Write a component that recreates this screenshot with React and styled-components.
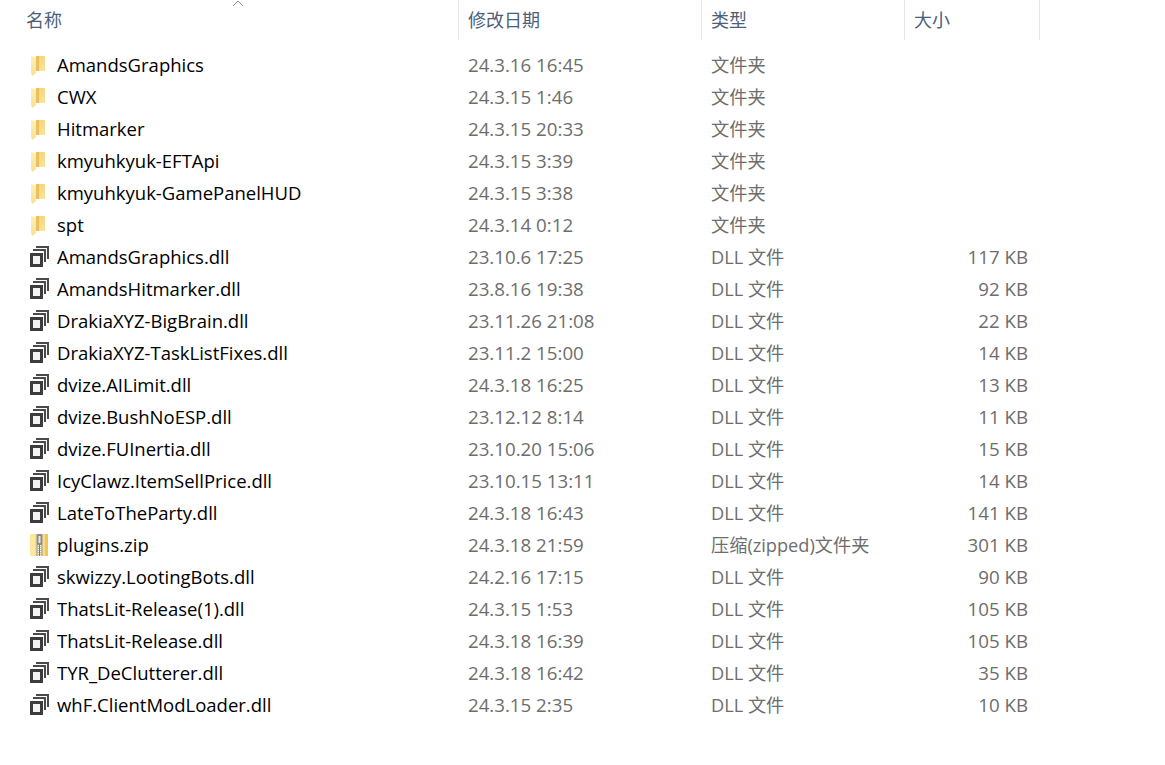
import React from 'react';
import styled, { createGlobalStyle } from 'styled-components';

const files = [
  ['folder', 'AmandsGraphics', '24.3.16 16:45', '文件夹', ''],
  ['folder', 'CWX', '24.3.15 1:46', '文件夹', ''],
  ['folder', 'Hitmarker', '24.3.15 20:33', '文件夹', ''],
  ['folder', 'kmyuhkyuk-EFTApi', '24.3.15 3:39', '文件夹', ''],
  ['folder', 'kmyuhkyuk-GamePanelHUD', '24.3.15 3:38', '文件夹', ''],
  ['folder', 'spt', '24.3.14 0:12', '文件夹', ''],
  ['dll', 'AmandsGraphics.dll', '23.10.6 17:25', 'DLL 文件', '117 KB'],
  ['dll', 'AmandsHitmarker.dll', '23.8.16 19:38', 'DLL 文件', '92 KB'],
  ['dll', 'DrakiaXYZ-BigBrain.dll', '23.11.26 21:08', 'DLL 文件', '22 KB'],
  ['dll', 'DrakiaXYZ-TaskListFixes.dll', '23.11.2 15:00', 'DLL 文件', '14 KB'],
  ['dll', 'dvize.AILimit.dll', '24.3.18 16:25', 'DLL 文件', '13 KB'],
  ['dll', 'dvize.BushNoESP.dll', '23.12.12 8:14', 'DLL 文件', '11 KB'],
  ['dll', 'dvize.FUInertia.dll', '23.10.20 15:06', 'DLL 文件', '15 KB'],
  ['dll', 'IcyClawz.ItemSellPrice.dll', '23.10.15 13:11', 'DLL 文件', '14 KB'],
  ['dll', 'LateToTheParty.dll', '24.3.18 16:43', 'DLL 文件', '141 KB'],
  ['zip', 'plugins.zip', '24.3.18 21:59', '压缩(zipped)文件夹', '301 KB'],
  ['dll', 'skwizzy.LootingBots.dll', '24.2.16 17:15', 'DLL 文件', '90 KB'],
  ['dll', 'ThatsLit-Release(1).dll', '24.3.15 1:53', 'DLL 文件', '105 KB'],
  ['dll', 'ThatsLit-Release.dll', '24.3.18 16:39', 'DLL 文件', '105 KB'],
  ['dll', 'TYR_DeClutterer.dll', '24.3.18 16:42', 'DLL 文件', '35 KB'],
  ['dll', 'whF.ClientModLoader.dll', '24.3.15 2:35', 'DLL 文件', '10 KB'],
];

const GlobalStyle = createGlobalStyle`
  html, body { margin: 0; background: #fff; }
  body { font-family: "Open Sans", "Noto Sans CJK SC", sans-serif; }
`;

const Page = styled.div`
  width: 1165px;
  height: 765px;
  overflow: hidden;
`;

const Header = styled.div`
  position: relative;
  display: grid;
  grid-template-columns: 459px 243px 203px 135px;
  height: 40px;
`;

const HeaderCell = styled.div`
  box-sizing: border-box;
  border-right: 1px solid #e5e5e5;
  padding-left: ${p => p.$pad}px;
  font-size: 18px;
  line-height: 40px;
  color: #4c607a;
`;

const SortCaret = styled.svg`
  position: absolute;
  left: 232px;
  top: 0;
`;

const List = styled.div`
  padding-top: 9px;
`;

const Row = styled.div`
  display: grid;
  grid-template-columns: 459px 243px 203px 123px;
  height: 32px;
  align-items: center;
`;

const NameCell = styled.div`
  display: flex;
  align-items: center;
  gap: 7px;
  padding-left: 30px;
  font-size: 18.5px;
  color: #000;
  white-space: nowrap;
`;

const NameText = styled.span`
  padding-bottom: 2px;
`;

const DateCell = styled.div`
  padding: 0 0 2px 9px;
  font-size: 18.7px;
  color: #6d6d6d;
`;

const TypeCell = styled.div`
  padding: 0 0 2px 9px;
  font-size: 18.2px;
  color: #6d6d6d;
`;

const SizeCell = styled.div`
  padding-bottom: 2px;
  text-align: right;
  font-size: 18.7px;
  color: #6d6d6d;
`;

const FileIcon = styled.svg`
  flex: none;
  display: block;
`;

function FolderIcon() {
  return (
    <FileIcon width="20" height="24" viewBox="0 0 20 24">
      <defs>
        <linearGradient id="folderBody" x1="0" y1="0" x2="0" y2="1">
          <stop offset="0" stopColor="#f5d77e" />
          <stop offset="1" stopColor="#fbe29a" />
        </linearGradient>
        <linearGradient id="folderFlap" x1="0" y1="0" x2="0" y2="1">
          <stop offset="0" stopColor="#fdf0bf" />
          <stop offset="1" stopColor="#fbdf8e" />
        </linearGradient>
      </defs>
      <path d="M6 3h9v15H6z" fill="url(#folderBody)" />
      <path d="M6 3h3v15H6z" fill="#ecc05a" />
      <path d="M1 3l5 1v16l-4 3-1-4z" fill="url(#folderFlap)" />
    </FileIcon>
  );
}

function DllIcon() {
  return (
    <FileIcon width="20" height="24" viewBox="0 0 20 24">
      <path d="M6 2h12v12" fill="none" stroke="#4a4a4a" strokeWidth="2" />
      <path d="M3 5h12v12" fill="none" stroke="#4a4a4a" strokeWidth="2" />
      <rect x="1.500" y="9.500" width="10" height="11" fill="#f4f4f4" stroke="#3c3c3c" strokeWidth="3" />
    </FileIcon>
  );
}

function ZipIcon() {
  return (
    <FileIcon width="20" height="24" viewBox="0 0 20 24">
      <rect x="0" y="1" width="18" height="22" rx="1" fill="#fbdc7f" />
      <rect x="0" y="1" width="5" height="22" fill="#fde89f" />
      <rect x="15" y="1" width="3" height="22" fill="#f0c65c" />
      <rect x="6" y="1" width="7" height="22" fill="#c8bb94" />
      <rect x="7" y="1" width="5" height="11" rx="1" fill="#8b8b8b" />
      <rect x="8.500" y="3" width="2" height="7" fill="#e8e8e8" />
      <path d="M9.500 12v11" stroke="#f6f6f6" strokeWidth="3" strokeDasharray="1 1" />
      <path d="M9.500 12v11" stroke="#777" strokeWidth="1" />
    </FileIcon>
  );
}

const icons = { folder: FolderIcon, dll: DllIcon, zip: ZipIcon };

export default function App() {
  return (
    <Page>
      <GlobalStyle />
      <Header>
        <HeaderCell $pad={26}>名称</HeaderCell>
        <HeaderCell $pad={9}>修改日期</HeaderCell>
        <HeaderCell $pad={9}>类型</HeaderCell>
        <HeaderCell $pad={9}>大小</HeaderCell>
        <SortCaret width="12" height="7" viewBox="0 0 12 7">
          <path d="M1 6l5-5 5 5" fill="none" stroke="#8a8a8a" strokeWidth="1" />
        </SortCaret>
      </Header>
      <List>
        {files.map(([kind, name, date, type, size]) => {
          const Icon = icons[kind];
          return (
            <Row key={name}>
              <NameCell><Icon /><NameText>{name}</NameText></NameCell>
              <DateCell>{date}</DateCell>
              <TypeCell>{type}</TypeCell>
              <SizeCell>{size}</SizeCell>
            </Row>
          );
        })}
      </List>
    </Page>
  );
}
